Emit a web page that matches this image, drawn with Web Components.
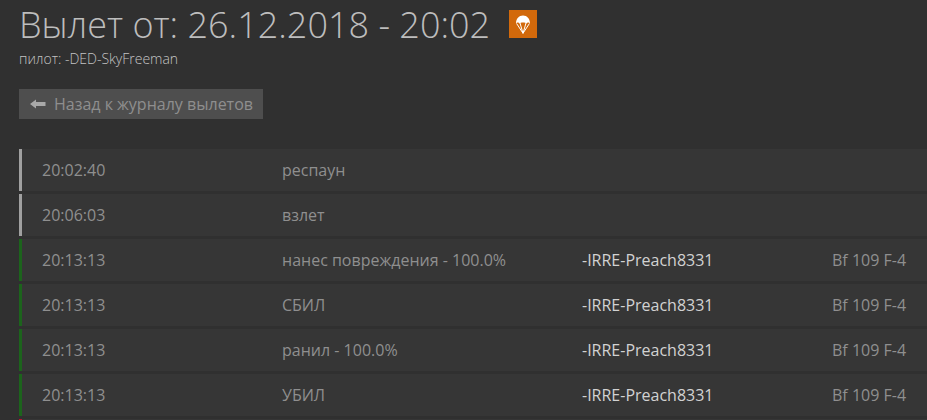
<!DOCTYPE html>
<html><head><meta charset="utf-8">
<style>
html,body{margin:0;padding:0;height:420px;overflow:hidden;background:#303030;font-family:"Open Sans",sans-serif;}
</style></head><body>
<flight-page>
  <flight-header slot="head" title-text="Вылет от: 26.12.2018 - 20:02" pilot="пилот: -DED-SkyFreeman"></flight-header>
  <back-button>Назад к журналу вылетов</back-button>
  <event-row kind="info" time="20:02:40" event="респаун"></event-row>
  <event-row kind="info" time="20:06:03" event="взлет"></event-row>
  <event-row kind="good" time="20:13:13" event="нанес повреждения - 100.0%" pilot="-IRRE-Preach8331" plane="Bf 109 F-4"></event-row>
  <event-row kind="good" time="20:13:13" event="СБИЛ" pilot="-IRRE-Preach8331" plane="Bf 109 F-4"></event-row>
  <event-row kind="good" time="20:13:13" event="ранил - 100.0%" pilot="-IRRE-Preach8331" plane="Bf 109 F-4"></event-row>
  <event-row kind="good" time="20:13:13" event="УБИЛ" pilot="-IRRE-Preach8331" plane="Bf 109 F-4"></event-row>
  <event-row kind="bad"></event-row>
</flight-page>
<script>
customElements.define('flight-page',class extends HTMLElement{constructor(){super();this.attachShadow({mode:'open'}).innerHTML=`
<style>:host{display:block;padding:0 0 0 19px}
.rows{display:flex;flex-direction:column;gap:3px;margin-top:30px}
</style><slot name="head"></slot><div class="rows"><slot></slot></div>`;}
connectedCallback(){const b=this.querySelector('back-button');if(b){b.slot='head';}}});
customElements.define('flight-header',class extends HTMLElement{constructor(){super();this.attachShadow({mode:'open'})}
connectedCallback(){this.shadowRoot.innerHTML=`
<style>:host{display:block}
.t{display:flex;align-items:flex-start;height:50px}
h1{margin:0;font-weight:300;font-size:36px;line-height:50px;color:#bdbdbd;white-space:nowrap}
.b{width:28px;height:28px;background:#d2690b;margin:10px 0 0 19px;display:flex;align-items:center;justify-content:center}
svg{display:block}
p{margin:0;font-weight:300;font-size:14px;line-height:18px;color:#c4c4c4}
</style>
<div class="t"><h1>${this.getAttribute('title-text')}</h1><span class="b"><svg width="14" height="19" viewBox="0 0 14 19"><path fill="#fff" d="M0 8.500C0 3.500 3 .5 7 .5s7 3 7 8c-.8-.8-1.300-1-1.900-1s-1.200.3-1.800 1c-.7-.7-1.500-1-3.300-1s-2.600.3-3.300 1c-.6-.7-1.200-1-1.800-1S.8 7.700 0 8.500z"/><path fill="none" stroke="#fff" stroke-width="1" d="M.6 8.500 7 18.300l6.400-9.800M4 8l3 10.300L10 8"/></svg></span></div>
<p>${this.getAttribute('pilot')}</p>`;}});
customElements.define('back-button',class extends HTMLElement{constructor(){super();this.attachShadow({mode:'open'}).innerHTML=`
<style>:host{display:flex;align-items:center;width:244px;height:30px;margin-top:21px;background:#4e4e4e;color:#8e8e8e;font-size:16px;box-sizing:border-box;padding-left:11px;white-space:nowrap}
svg{display:block;margin-right:8px}
</style><svg width="16" height="10" viewBox="0 0 16 10"><path fill="#a8a8a8" d="M0 5 6 .5V3h9.500v4H6v2.500z"/></svg><slot></slot>`;}});
customElements.define('event-row',class extends HTMLElement{constructor(){super();this.attachShadow({mode:'open'})}
connectedCallback(){const g=n=>this.getAttribute(n)||'';const c={info:'#a0a0a0',good:'#1c641c',bad:'#c01030'}[g('kind')];
this.shadowRoot.innerHTML=`
<style>:host{display:grid;grid-template-columns:240px 300px 250px 1fr;height:42px;align-items:center;box-sizing:border-box;background:#363636;border-left:3px solid ${c};padding-left:20px;font-size:16px;color:#8f8f8f;white-space:nowrap}
.p{color:#d2d2d2}
</style><span>${g('time')}</span><span>${g('event')}</span><span class="p">${g('pilot')}</span><span>${g('plane')}</span>`;}});
</script>
</body></html>
